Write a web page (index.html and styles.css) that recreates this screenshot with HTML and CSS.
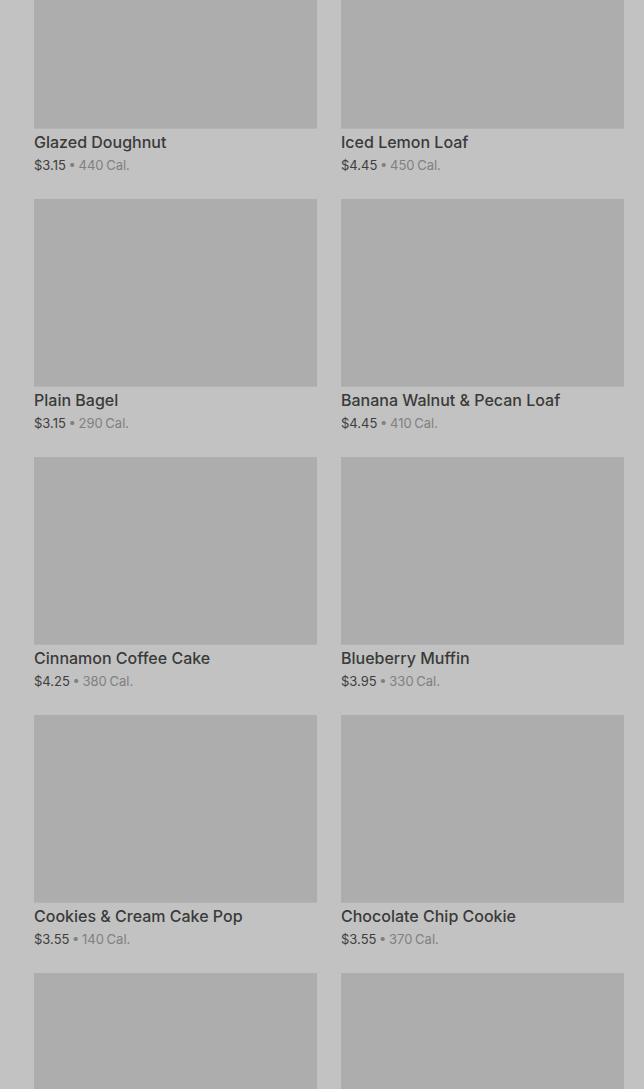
FILE: index.html
```html
<!DOCTYPE html>
<html lang="en">
<head>
    <meta charset="UTF-8">
    <meta name="viewport" content="width=device-width, initial-scale=1.0">
    <title>Bakery</title>
    <link rel="stylesheet" href="styles.css">
</head>
<body>
    <div class="menu-grid">
        <div class="item">
            <div class="item-image"></div>
            <div class="item-name">Glazed Doughnut</div>
            <div class="item-meta"><span class="price">$3.15</span> • 440 Cal.</div>
        </div>
        <div class="item">
            <div class="item-image"></div>
            <div class="item-name">Iced Lemon Loaf</div>
            <div class="item-meta"><span class="price">$4.45</span> • 450 Cal.</div>
        </div>
        <div class="item">
            <div class="item-image"></div>
            <div class="item-name">Plain Bagel</div>
            <div class="item-meta"><span class="price">$3.15</span> • 290 Cal.</div>
        </div>
        <div class="item">
            <div class="item-image"></div>
            <div class="item-name">Banana Walnut &amp; Pecan Loaf</div>
            <div class="item-meta"><span class="price">$4.45</span> • 410 Cal.</div>
        </div>
        <div class="item">
            <div class="item-image"></div>
            <div class="item-name">Cinnamon Coffee Cake</div>
            <div class="item-meta"><span class="price">$4.25</span> • 380 Cal.</div>
        </div>
        <div class="item">
            <div class="item-image"></div>
            <div class="item-name">Blueberry Muffin</div>
            <div class="item-meta"><span class="price">$3.95</span> • 330 Cal.</div>
        </div>
        <div class="item">
            <div class="item-image"></div>
            <div class="item-name">Cookies &amp; Cream Cake Pop</div>
            <div class="item-meta"><span class="price">$3.55</span> • 140 Cal.</div>
        </div>
        <div class="item">
            <div class="item-image"></div>
            <div class="item-name">Chocolate Chip Cookie</div>
            <div class="item-meta"><span class="price">$3.55</span> • 370 Cal.</div>
        </div>
        <div class="item">
            <div class="item-image"></div>
        </div>
        <div class="item">
            <div class="item-image"></div>
        </div>
    </div>
</body>
</html>
```

FILE: styles.css
```css
body {
    margin: 0;
    background-color: #c2c2c2;
    font-family: Inter, "Noto Sans", sans-serif;
    overflow: hidden;
}

.menu-grid {
    display: grid;
    grid-template-columns: 283px 283px;
    column-gap: 24px;
    row-gap: 23px;
    padding: 0 20px 0 34px;
    margin-top: -59px;
}

.item-image {
    height: 187px;
    background-color: #adadad;
    border-bottom: 1px solid #b4b4b4;
}

.item-name {
    margin-top: 2px;
    font-size: 16px;
    line-height: 22px;
    font-weight: 500;
    color: #3a3a3a;
}

.item-meta {
    margin-top: 1px;
    font-size: 13px;
    line-height: 22px;
    color: #808080;
    word-spacing: -1px;
}

.price {
    color: #3e3e3e;
}
```
